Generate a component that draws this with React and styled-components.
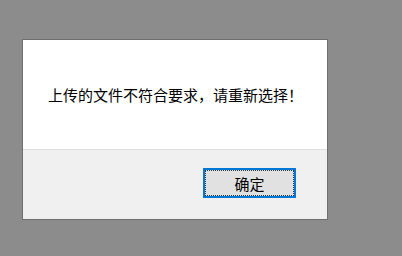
import React from "react";
import styled, { createGlobalStyle } from "styled-components";

const Global = createGlobalStyle`
  html, body { margin: 0; padding: 0; background: #8c8c8c; }
  body { font-family: "Noto Sans CJK SC", "Noto Sans", sans-serif; }
`;

const Page = styled.div`
  width: 402px;
  height: 256px;
  padding: 39px 0 0 22px;
  box-sizing: border-box;
`;

const Dialog = styled.div`
  width: 306px;
  height: 181px;
  box-sizing: border-box;
  border: 1px solid #6f6f6f;
  background: #f0f0f0;
  display: flex;
  flex-direction: column;
`;

const Body = styled.div`
  height: 110px;
  background: #ffffff;
  border-bottom: 1px solid #dfdfdf;
  display: flex;
  align-items: center;
  padding: 0 0 0 25px;
  box-sizing: border-box;
`;

const Message = styled.div`
  font-size: 15px;
  color: #000;
  line-height: 20px;
`;

const Footer = styled.div`
  flex: 1;
  display: flex;
  justify-content: flex-end;
  align-items: flex-start;
  padding: 18px 31px 0 0;
`;

const Button = styled.button`
  width: 93px;
  height: 30px;
  box-sizing: border-box;
  border: 2px solid #0078d7;
  background: #e1e1e1;
  padding: 0;
  font-family: inherit;
  font-size: 15px;
  color: #000;
  position: relative;
  display: flex;
  align-items: center;
  justify-content: center;
  &::after {
    content: "";
    position: absolute;
    inset: 0;
    border: 1px dotted #333;
  }
`;

export default function App() {
  return (
    <>
      <Global />
      <Page>
        <Dialog>
          <Body>
            <Message>上传的文件不符合要求，请重新选择！</Message>
          </Body>
          <Footer>
            <Button>确定</Button>
          </Footer>
        </Dialog>
      </Page>
    </>
  );
}
